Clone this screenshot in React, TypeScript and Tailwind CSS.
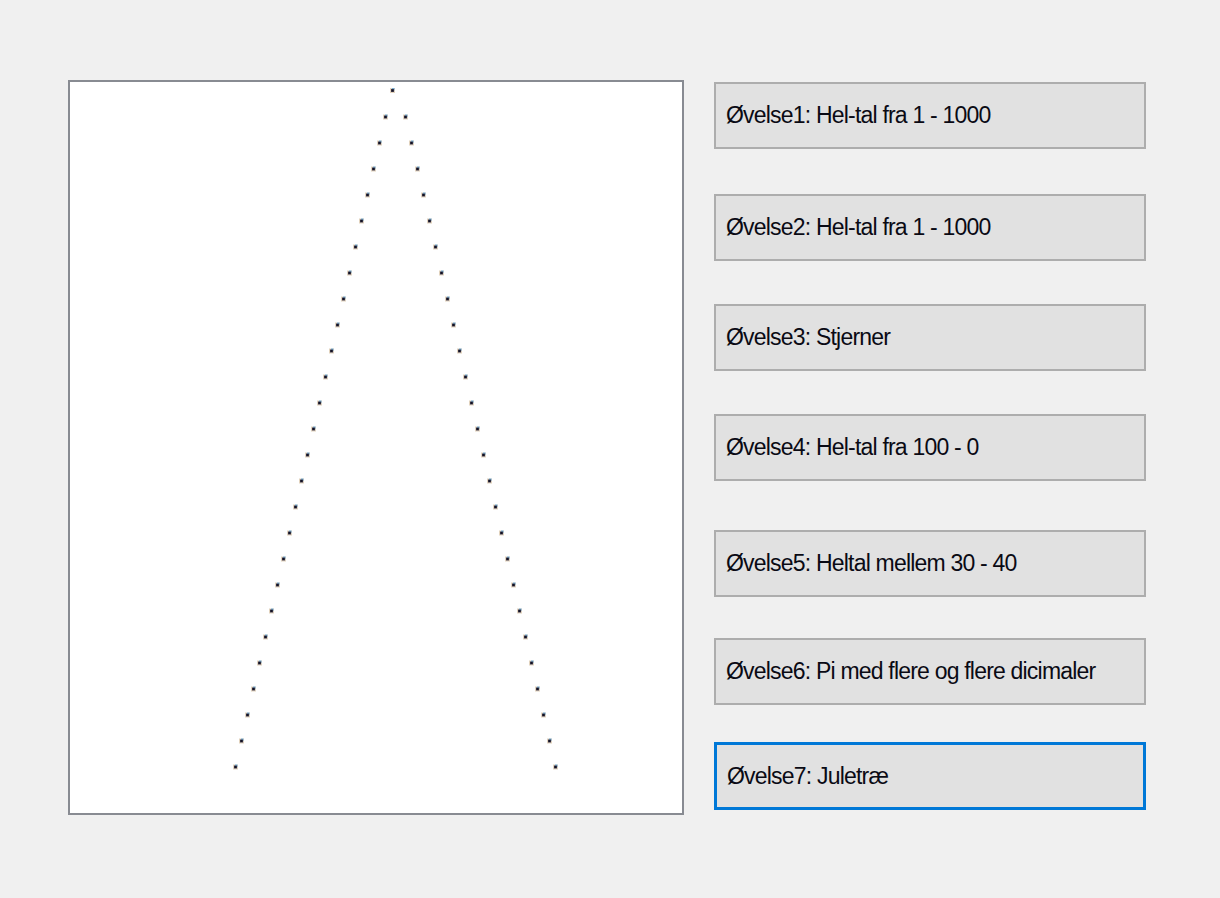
import React from "react";

const rows = Array.from({ length: 26 }, (_, i) => i);

// Dot centres in page coordinates; the svg origin is the inside of the box border (70, 82)
function Star({ x, y }: { x: number; y: number }) {
  const cx = x - 70;
  const cy = y - 82;
  return (
    <g>
      <rect x={cx - 2.5} y={cy - 2.5} width={5} height={5} fill="#d8c4a8" opacity={0.75} />
      <rect x={cx - 0.5} y={cy - 2.5} width={2.5} height={2.5} fill="#5aa6e0" opacity={0.8} />
      <rect x={cx - 1.5} y={cy - 1.5} width={3} height={3} fill="#4a4658" />
      <rect x={cx - 1} y={cy - 1} width={2} height={2} fill="#141222" />
    </g>
  );
}

const buttons = [
  { label: "Øvelse1: Hel-tal fra 1 - 1000", cls: "mt-[2px] h-[67px] border-2 border-[#adadad]" },
  { label: "Øvelse2: Hel-tal fra 1 - 1000", cls: "mt-[45px] h-[67px] border-2 border-[#adadad]" },
  { label: "Øvelse3: Stjerner", cls: "mt-[43px] h-[67px] border-2 border-[#adadad]" },
  { label: "Øvelse4: Hel-tal fra 100 - 0", cls: "mt-[43px] h-[67px] border-2 border-[#adadad]" },
  { label: "Øvelse5: Heltal mellem 30 - 40", cls: "mt-[49px] h-[67px] border-2 border-[#adadad]" },
  { label: "Øvelse6: Pi med flere og flere dicimaler", cls: "mt-[41px] h-[67px] border-2 border-[#adadad]" },
  { label: "Øvelse7: Juletræ", cls: "mt-[37px] h-[68px] border-[3px] border-[#0078d7]" },
];

export default function App() {
  return (
    <div className="w-[1220px] h-[898px] bg-[#f0f0f0] overflow-hidden">
      <div className="flex pl-[68px] pt-[80px] gap-[30px]">
        <div className="w-[616px] h-[735px] bg-white border-2 border-[#888b92] shrink-0">
          <svg width="612" height="731" viewBox="0 0 612 731" className="block">
            <Star x={392.5} y={90.5} />
            {rows.map((i) => (
              <React.Fragment key={i}>
                <Star x={385.5 - 6 * i} y={117 + 26 * i} />
                <Star x={405.5 + 6 * i} y={117 + 26 * i} />
              </React.Fragment>
            ))}
          </svg>
        </div>
        <div className="flex flex-col w-[432px]">
          {buttons.map((b) => (
            <div
              key={b.label}
              className={`${b.cls} bg-[#e1e1e1] flex items-center pl-[10px] text-[23px] tracking-[-0.8px] text-[#0a0a14]`}
              style={{ fontFamily: '"Liberation Sans", Arial, sans-serif' }}
            >
              {b.label}
            </div>
          ))}
        </div>
      </div>
    </div>
  );
}
